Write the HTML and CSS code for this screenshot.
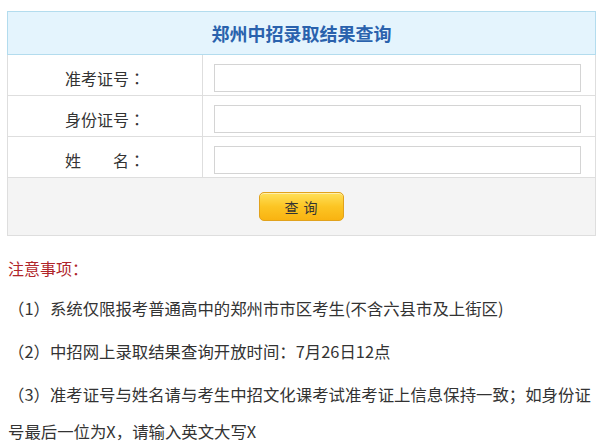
FILE: index.html
```html
<!doctype html>
<html lang="zh-CN">
  <head>
    <meta charset="UTF-8" />
    <meta name="viewport" content="width=device-width, initial-scale=1.0" />
    <title>郑州中招录取结果查询</title>
    <link rel="stylesheet" href="styles.css">
  </head>
  <body>
    <div class="page">
      <table class="query-table">
        <tr>
          <th colspan="2" class="query-title">郑州中招录取结果查询</th>
        </tr>
        <tr>
          <td class="label">准考证号<span class="colon" lang="zh-TW">：</span></td>
          <td class="field"><input type="text" class="text-input" /></td>
        </tr>
        <tr>
          <td class="label">身份证号<span class="colon" lang="zh-TW">：</span></td>
          <td class="field"><input type="text" class="text-input" /></td>
        </tr>
        <tr>
          <td class="label">姓　　名<span class="colon" lang="zh-TW">：</span></td>
          <td class="field"><input type="text" class="text-input" /></td>
        </tr>
        <tr>
          <td colspan="2" class="actions">
            <button class="query-button">查 询</button>
          </td>
        </tr>
      </table>

      <div class="notice">
        <h3>注意事项：</h3>
        <p>（1）系统仅限报考普通高中的郑州市市区考生(不含六县市及上街区)</p>
        <p>（2）中招网上录取结果查询开放时间：7月26日12点</p>
        <p>（3）准考证号与姓名请与考生中招文化课考试准考证上信息保持一致；如身份证号最后一位为X，请输入英文大写X</p>
      </div>
    </div>
  </body>
</html>
```

FILE: styles.css
```css
* {
  margin: 0;
  padding: 0;
  box-sizing: border-box;
}

body {
  font-family: "Noto Sans CJK SC", "Noto Sans", sans-serif;
  background: #fff;
  color: #333;
}

.page {
  padding: 11px 0 0 7px;
  width: 600px;
}

.query-table {
  width: 589px;
  border-collapse: collapse;
}

.query-title {
  height: 43px;
  background: #e4f4fd;
  border: 1px solid #b3dcee;
  color: #2a62ad;
  font-size: 18px;
  font-weight: bold;
  text-align: center;
  vertical-align: middle;
}

.query-table td {
  border: 1px solid #dedede;
}

.label {
  width: 195px;
  height: 41px;
  padding-top: 5px;
  font-size: 16px;
  text-align: center;
  color: #333;
}

.colon {
  font-family: "Noto Sans CJK TC", sans-serif;
}

.field {
  height: 41px;
  padding: 8px 14px 3px 11px;
}

.text-input {
  display: block;
  width: 100%;
  height: 28px;
  border: 1px solid #d4d4d4;
  background: #fff;
}

.actions {
  height: 58px;
  background: #f4f4f4;
  text-align: center;
  vertical-align: middle;
}

.query-button {
  width: 85px;
  height: 29px;
  border: 1px solid #e1a21c;
  border-radius: 5px;
  background: linear-gradient(#ffe05a 0%, #fcc524 50%, #f9b311 100%);
  box-shadow: inset 0 1px 0 rgba(255, 255, 255, 0.5);
  color: #333;
  font-family: "Noto Sans CJK SC", sans-serif;
  font-size: 14px;
  letter-spacing: 1px;
  cursor: pointer;
}

.notice {
  padding: 14px 0 0 1px;
  width: 590px;
}

.notice h3 {
  color: #b0252a;
  font-size: 16px;
  font-weight: normal;
  line-height: 37px;
  margin-bottom: 3px;
}

.notice p {
  font-size: 16.4px;
  line-height: 37px;
  margin-bottom: 6px;
}
```
